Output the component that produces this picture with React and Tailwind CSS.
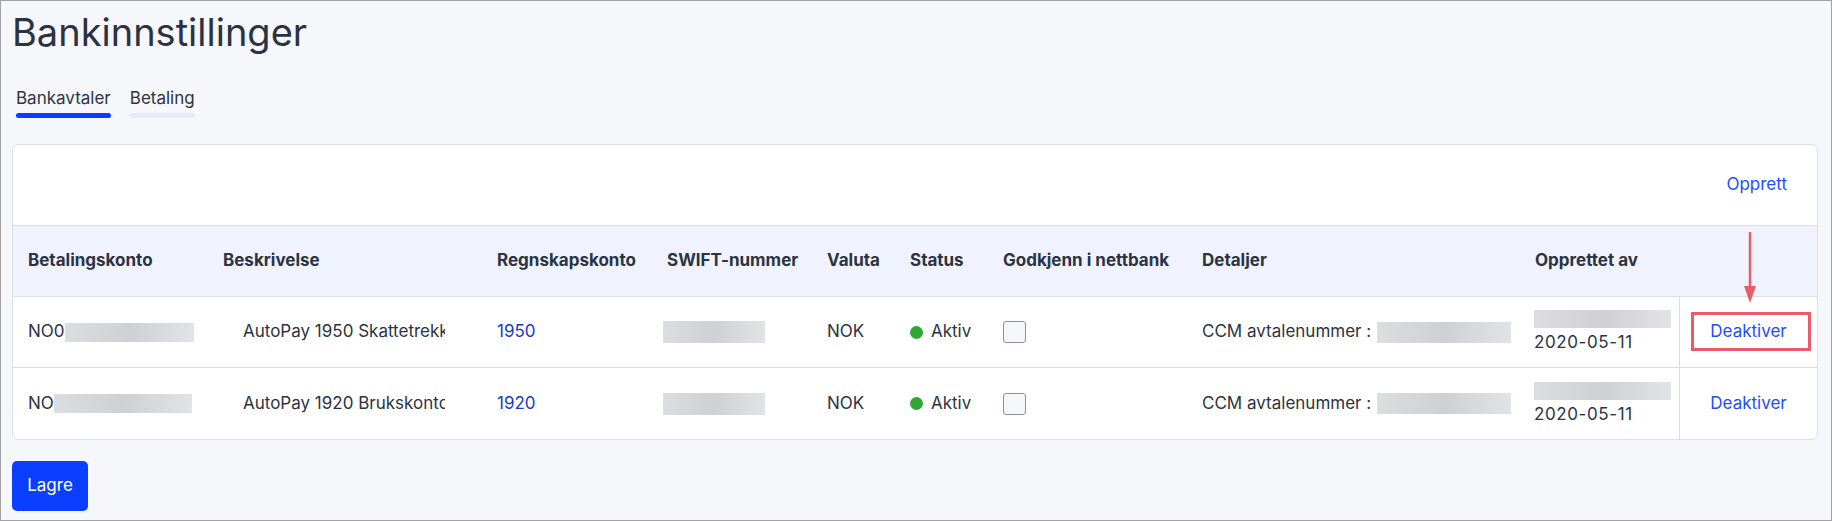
import React from 'react';

const cols = 'grid grid-cols-[195px_274px_170px_160px_83px_93px_199px_333px_159px_1fr]';

const rows = [
  { konto: 'NO0', blurW: 'w-[129px]', desc: 'AutoPay 1950 Skattetrekk', regn: '1950', highlight: true },
  { konto: 'NO', blurW: 'w-[138px]', desc: 'AutoPay 1920 Brukskonto', regn: '1920', highlight: false },
];

const Blur = ({ className }) => (
  <div className={`bg-gradient-to-r from-[#dcdde0] via-[#cfd0d4] to-[#e2e3e6] ${className}`} />
);

const App = () => {
  return (
    <div className="h-[521px] w-full border border-[#a3a3a3] bg-[#f6f7fb] font-['Inter',sans-serif] text-[#2c3342]">
      <div className="pl-[11px] pr-[13px]">
        <h1 className="pt-[8px] text-[38px] leading-[46px] font-normal text-[#2b3241]">
          Bankinnstillinger
        </h1>

        {/* Tabs */}
        <div className="mt-[31px] flex gap-[19px] pl-[4px]">
          <div className="flex flex-col">
            <span className="text-[17px] leading-6">Bankavtaler</span>
            <span className="mt-[3px] h-[5px] rounded-full bg-[#0b3cff]" />
          </div>
          <div className="flex flex-col">
            <span className="text-[17px] leading-6">Betaling</span>
            <span className="mt-[3px] h-[5px] rounded-full bg-[#e6eafb]" />
          </div>
        </div>

        {/* Card */}
        <div className="relative mt-[26px] rounded-md border border-[#dcdfe6] bg-white">
          <div className="flex h-[80px] items-center justify-end pr-[30px]">
            <a className="text-[17px] text-[#1f4bff]">Opprett</a>
          </div>

          <div className={`${cols} h-[72px] items-center border-y border-[#dcdfe6] bg-[#f0f3fd] text-[17px] font-bold`}>
            <div className="pl-[15px]">Betalingskonto</div>
            <div className="pl-[15px]">Beskrivelse</div>
            <div className="pl-[15px]">Regnskapskonto</div>
            <div className="pl-[15px]">SWIFT-nummer</div>
            <div className="pl-[15px]">Valuta</div>
            <div className="pl-[15px]">Status</div>
            <div className="pl-[15px]">Godkjenn i nettbank</div>
            <div className="pl-[15px]">Detaljer</div>
            <div className="pl-[15px]">Opprettet av</div>
            <div />
          </div>

          {rows.map((r, i) => (
            <div
              key={i}
              className={`${cols} h-[71px] items-stretch text-[17px] ${i === 0 ? 'border-b border-[#dcdcdc]' : ''}`}
            >
              <div className="flex items-center pl-[15px]">
                <span>{r.konto}</span>
                <Blur className={`h-[19px] ${r.blurW}`} />
              </div>
              <div className="flex items-center pl-[35px]">
                <span className="block w-[202px] overflow-hidden whitespace-nowrap">{r.desc}</span>
              </div>
              <div className="flex items-center pl-[15px]">
                <a className="text-[#1839cc]">{r.regn}</a>
              </div>
              <div className="flex items-center pl-[11px]">
                <Blur className="h-[22px] w-[102px]" />
              </div>
              <div className="flex items-center pl-[15px]">NOK</div>
              <div className="flex items-center gap-[8px] pl-[15px]">
                <span className="h-[13px] w-[13px] rounded-full bg-[#2fa833]" />
                <span>Aktiv</span>
              </div>
              <div className="flex items-center pl-[15px]">
                <span className="h-[22px] w-[23px] rounded-[3px] border border-[#8a909c] bg-[#f6f7fb]" />
              </div>
              <div className="flex items-center pl-[15px]">
                <span>CCM avtalenummer :</span>
                <Blur className="ml-[6px] h-[21px] w-[134px]" />
              </div>
              <div className="flex flex-col justify-center pl-[14px]">
                <Blur className="h-[18px] w-[137px]" />
                <span className="mt-[2px] leading-6 tracking-[0.6px]">2020-05-11</span>
              </div>
              <div className="relative flex items-center justify-center border-l border-[#dcdcdc]">
                <a className="text-[#1f4bff]">Deaktiver</a>
                {r.highlight && (
                  <span className="absolute bottom-[16px] left-[11px] right-[6px] top-[15px] border-[3px] border-[#e85b6b]" />
                )}
              </div>
            </div>
          ))}

          {/* annotation arrow */}
          <svg className="absolute left-[1730px] top-[87px]" width="14" height="72" viewBox="0 0 14 72">
            <line x1="7" y1="0" x2="7" y2="56" stroke="#e85b6b" strokeWidth="2.5" />
            <polygon points="1,54 13,54 7,71" fill="#e85b6b" />
          </svg>
        </div>

        <button className="mt-[21px] h-[50px] w-[76px] rounded-[5px] bg-[#0b3fff] text-[17px] text-white">
          Lagre
        </button>
      </div>
    </div>
  );
};

export default App;
